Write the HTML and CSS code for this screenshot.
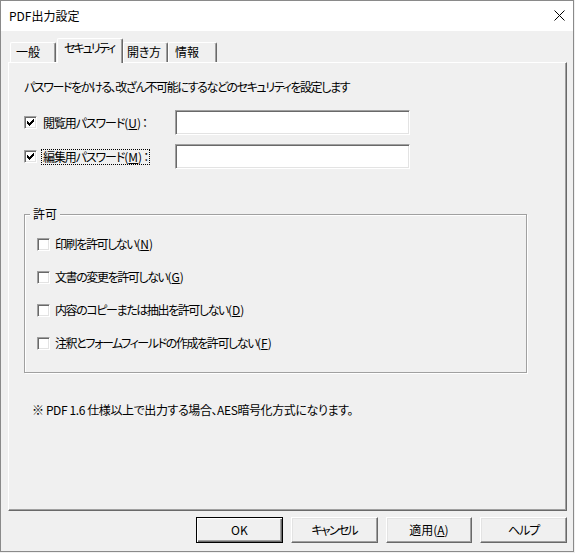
FILE: index.html
```html
<!DOCTYPE html>
<html lang="ja">
<head>
<meta charset="utf-8">
<title>PDF出力設定</title>
<link rel="stylesheet" href="styles.css">
</head>
<body>
<div class="window">
  <div class="titlebar">
    <span class="title">PDF出力設定</span>
    <svg class="close" width="11" height="11" viewBox="0 0 11 11"><path d="M0.5 0.5L10.5 10.5M10.5 0.5L0.5 10.5" stroke="#000" stroke-width="1" fill="none"/></svg>
  </div>
  <div class="client">
    <div class="tabs">
      <div class="tab t1">一般</div>
      <div class="tab active t2">セキュリティ</div>
      <div class="tab t3">開き方</div>
      <div class="tab t4">情報</div>
    </div>
    <div class="panel">
      <p class="desc">パスワードをかける、改ざん不可能にするなどのセキュリティを設定します</p>
      <div class="pw-grid">
        <div class="check">
          <span class="box"><svg width="7" height="7" viewBox="0 0 7 7" shape-rendering="crispEdges"><path d="M6 0h1v3h-1v1h-1v1h-1v1h-1v1h-1v-1h-1v-1h-1v-3h1v1h1v1h1v-1h1v-1h1z" fill="#000"/></svg></span>
          <span class="lbl">閲覧用パスワード<span class="key">(<u>U</u>)</span>：</span>
        </div>
        <span class="input"></span>
        <div class="check">
          <span class="box"><svg width="7" height="7" viewBox="0 0 7 7" shape-rendering="crispEdges"><path d="M6 0h1v3h-1v1h-1v1h-1v1h-1v1h-1v-1h-1v-1h-1v-3h1v1h1v1h1v-1h1v-1h1z" fill="#000"/></svg></span>
          <span class="lbl focus">編集用パスワード<span class="key">(<u>M</u>)</span>：</span>
        </div>
        <span class="input"></span>
      </div>
      <div class="group">
        <span class="legend">許可</span>
        <div class="opts">
          <div class="opt"><span class="box"></span><span class="opt-lbl">印刷を許可しない<span class="key">(<u>N</u>)</span></span></div>
          <div class="opt"><span class="box"></span><span class="opt-lbl">文書の変更を許可しない<span class="key">(<u>G</u>)</span></span></div>
          <div class="opt"><span class="box"></span><span class="opt-lbl">内容のコピーまたは抽出を許可しない<span class="key">(<u>D</u>)</span></span></div>
          <div class="opt"><span class="box"></span><span class="opt-lbl">注釈とフォームフィールドの作成を許可しない<span class="key">(<u>F</u>)</span></span></div>
        </div>
      </div>
      <p class="note">※ PDF 1.6 仕様以上で出力する場合、AES暗号化方式になります。</p>
    </div>
    <div class="buttons">
      <button class="btn default">OK</button>
      <button class="btn kana">キャンセル</button>
      <button class="btn">適用(<u>A</u>)</button>
      <button class="btn kana-s">ヘルプ</button>
    </div>
  </div>
</div>
</body>
</html>
```

FILE: styles.css
```css
html, body {
  margin: 0;
  padding: 0;
  background: #f0f0f0;
}

body {
  font-family: "Noto Sans CJK JP", "Noto Sans", sans-serif;
  font-size: 12px;
  line-height: 16px;
  color: #000;
  font-feature-settings: "palt";
}

.window {
  width: 574px;
  height: 552px;
  box-sizing: border-box;
  border: 1px solid #8a8a8a;
  background: #f0f0f0;
  display: flex;
  flex-direction: column;
}

.titlebar {
  height: 30px;
  flex: none;
  background: #fff;
  display: flex;
  align-items: center;
  justify-content: space-between;
  padding: 0 8px 0 8px;
}

.title {
  line-height: 16px;
}

.close {
  display: block;
  margin-top: -1px;
}

.client {
  flex: 1;
  padding: 0 6px 0 7px;
}

.tabs {
  margin-top: 7px;
  height: 24px;
  display: flex;
  align-items: flex-end;
  padding-left: 2px;
}

.tab {
  height: 20px;
  box-sizing: border-box;
  border-top: 1px solid #fff;
  border-left: 1px solid #fff;
  border-right: 1px solid #696969;
  box-shadow: inset -1px 0 0 #a0a0a0;
  border-radius: 2px 2px 0 0;
  line-height: 18px;
  white-space: nowrap;
  overflow: hidden;
  background: #f0f0f0;
}

.t1 { width: 46px; padding-left: 5px; }
.t2 { width: 66px; padding-left: 6px; margin-left: 1px; letter-spacing: -2px; }
.t3 { width: 45px; padding-left: 3px; letter-spacing: -0.3px; }
.t4 { width: 49px; padding-left: 6px; }

.tab.active {
  height: 25px;
  margin-bottom: -1px;
  position: relative;
  z-index: 1;
}

.panel {
  width: 559px;
  height: 449px;
  box-sizing: border-box;
  border-top: 1px solid #fff;
  border-left: 1px solid #fff;
  border-right: 1px solid #696969;
  border-bottom: 1px solid #696969;
  box-shadow: inset -1px -1px 0 #a0a0a0;
  padding: 16px 0 0 15px;
}

.desc {
  margin: 0;
  line-height: 16px;
  letter-spacing: -1.4px;
}

.pw-grid {
  margin-top: 15px;
  display: grid;
  grid-template-columns: 151px 235px;
  grid-auto-rows: 25px;
  row-gap: 9px;
  align-items: center;
}

.check {
  display: flex;
  align-items: center;
}

.box {
  display: block;
  flex: none;
  width: 13px;
  height: 13px;
  box-sizing: border-box;
  background: #fff;
  border: 1px solid;
  border-color: #a0a0a0 #fff #fff #a0a0a0;
  box-shadow: inset 1px 1px 0 #696969, inset -1px -1px 0 #e3e3e3;
}

.box svg {
  display: block;
  margin: 2px;
}

.lbl {
  margin-left: 4px;
  padding: 0 1px;
  border: 1px dotted transparent;
  line-height: 14px;
  white-space: nowrap;
  letter-spacing: -1.1px;
}

.lbl.focus {
  border-color: #000;
}

.key {
  letter-spacing: 0;
  margin-right: 1px;
}

.input {
  display: block;
  height: 25px;
  box-sizing: border-box;
  background: #fff;
  border: 1px solid;
  border-color: #a0a0a0 #fff #fff #a0a0a0;
  box-shadow: inset 1px 1px 0 #696969, inset -1px -1px 0 #e3e3e3;
}

.group {
  margin-top: 45px;
  width: 503px;
  box-sizing: border-box;
  border: 1px solid #a0a0a0;
  box-shadow: 1px 1px 0 #fff, inset 1px 1px 0 #fff;
  padding-bottom: 21px;
}

.legend {
  display: block;
  width: max-content;
  margin: -9px 0 0 5px;
  padding: 0 3px;
  background: #f0f0f0;
  line-height: 16px;
}

.opts {
  margin-top: 14px;
  padding-left: 12px;
  display: flex;
  flex-direction: column;
  gap: 17px;
}

.opt {
  display: flex;
  align-items: center;
  height: 16px;
}

.opt-lbl {
  margin-left: 5px;
  white-space: nowrap;
  letter-spacing: -1.4px;
}

.note {
  margin: 29px 0 0 0;
  padding-left: 8px;
  line-height: 16px;
  letter-spacing: -0.4px;
}

.buttons {
  margin-top: 6px;
  padding-left: 188px;
  display: flex;
  gap: 8px;
}

.btn {
  width: 87px;
  height: 26px;
  box-sizing: border-box;
  margin: 0;
  padding: 0;
  font-family: "Noto Sans CJK JP", "Noto Sans", sans-serif;
  font-size: 12px;
  line-height: 16px;
  font-feature-settings: "palt";
  color: #000;
  background: #f0f0f0;
  border: 1px solid;
  border-color: #fff #696969 #696969 #fff;
  box-shadow: inset -1px -1px 0 #a0a0a0, inset 1px 1px 0 #e3e3e3;
  border-radius: 0;
}

.btn.kana { letter-spacing: -1.8px; }
.btn.kana-s { letter-spacing: -1px; }

.btn.default {
  border: 1px solid #000;
  box-shadow: inset 1px 1px 0 #fff, inset -1px -1px 0 #696969, inset -2px -2px 0 #a0a0a0;
}
```
